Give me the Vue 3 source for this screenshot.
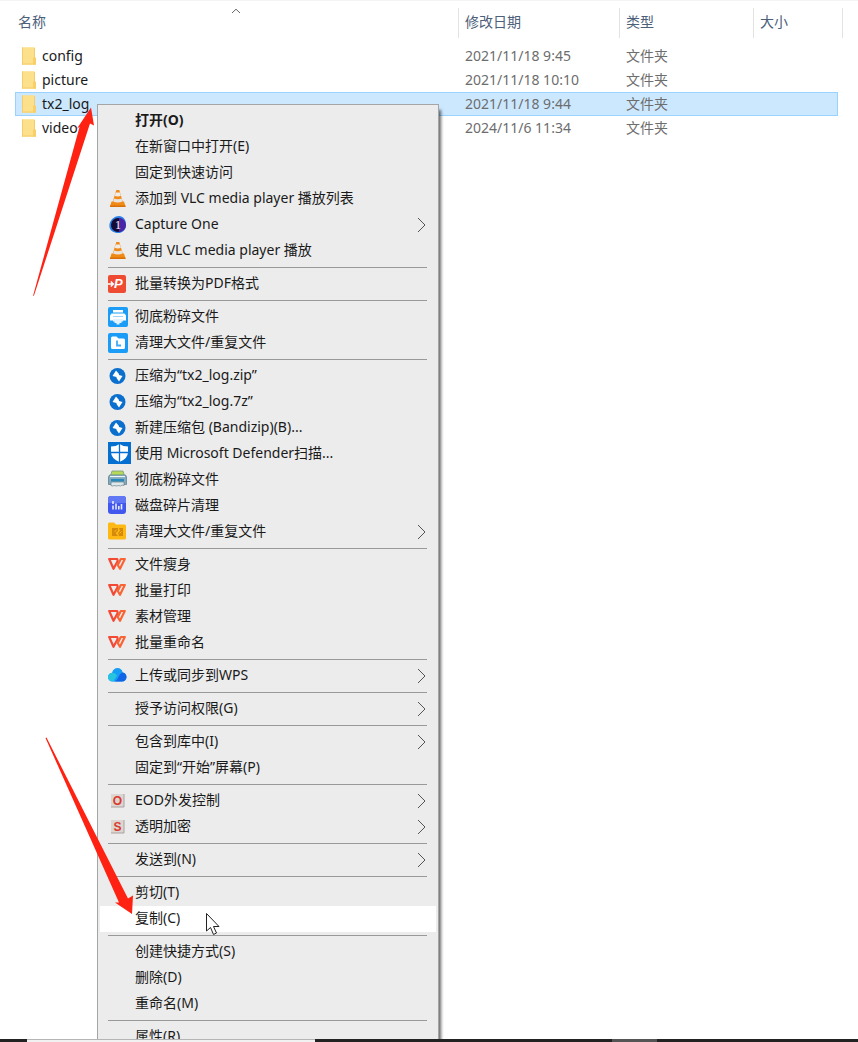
<script setup>
import { ref } from 'vue'

const files = [
  { name: 'config', date: '2021/11/18 9:45', type: '文件夹' },
  { name: 'picture', date: '2021/11/18 10:10', type: '文件夹' },
  { name: 'tx2_log', date: '2021/11/18 9:44', type: '文件夹' },
  { name: 'video', date: '2024/11/6 11:34', type: '文件夹' },
]
const selected = ref('tx2_log')
const active = ref('复制(C)')

const groups = [
  [
    { label: '打开(O)', bold: true },
    { label: '在新窗口中打开(E)' },
    { label: '固定到快速访问' },
    { label: '添加到 VLC media player 播放列表', icon: 'vlc' },
    { label: 'Capture One', icon: 'capture', sub: true },
    { label: '使用 VLC media player 播放', icon: 'vlc' },
  ],
  [{ label: '批量转换为PDF格式', icon: 'pdf' }],
  [
    { label: '彻底粉碎文件', icon: 'shred' },
    { label: '清理大文件/重复文件', icon: 'clean' },
  ],
  [
    { label: '压缩为“tx2_log.zip”', icon: 'bandizip' },
    { label: '压缩为“tx2_log.7z”', icon: 'bandizip' },
    { label: '新建压缩包 (Bandizip)(B)...', icon: 'bandizip' },
    { label: '使用 Microsoft Defender扫描...', icon: 'defender' },
    { label: '彻底粉碎文件', icon: 'printer' },
    { label: '磁盘碎片清理', icon: 'disk' },
    { label: '清理大文件/重复文件', icon: 'folder', sub: true },
  ],
  [
    { label: '文件瘦身', icon: 'wps' },
    { label: '批量打印', icon: 'wps' },
    { label: '素材管理', icon: 'wps' },
    { label: '批量重命名', icon: 'wps' },
  ],
  [{ label: '上传或同步到WPS', icon: 'cloud', sub: true }],
  [{ label: '授予访问权限(G)', sub: true }],
  [{ label: '包含到库中(I)', sub: true }, { label: '固定到“开始”屏幕(P)' }],
  [
    { label: 'EOD外发控制', icon: 'eod', sub: true },
    { label: '透明加密', icon: 'secure', sub: true },
  ],
  [{ label: '发送到(N)', sub: true }],
  [{ label: '剪切(T)' }, { label: '复制(C)' }],
  [{ label: '创建快捷方式(S)' }, { label: '删除(D)' }, { label: '重命名(M)' }],
  [{ label: '属性(R)' }],
]
</script>

<template>
  <div class="screen">
    <main class="explorer">
      <svg class="sort" viewBox="0 0 10 6" aria-hidden="true"><path d="M1 5 5 1.2 9 5" /></svg>
      <table class="files">
        <colgroup>
          <col />
          <col class="c-date" />
          <col class="c-type" />
          <col class="c-size" />
        </colgroup>
        <thead>
          <tr>
            <th scope="col">名称</th>
            <th scope="col">修改日期</th>
            <th scope="col">类型</th>
            <th scope="col">大小</th>
          </tr>
        </thead>
        <tbody>
          <tr
            v-for="f in files"
            :key="f.name"
            :class="{ selected: f.name === selected }"
            @click="selected = f.name"
          >
            <td>
              <span class="name">
                <svg width="16" height="20" viewBox="0 0 16 20" aria-hidden="true">
                  <path d="M1 1.5h12.5V13H15v5.5H1z" fill="#fbdc82" />
                  <path d="M1 1.500h12.500V18.500H1z" fill="#fde08c" />
                  <path d="M1.500 1.500v17M13.500 2v11M1 18h14" stroke="#f3cd68" fill="none" />
                  <path d="M12 18.500v-6.500l1.500-1.500 1.500 1.500v6.500z" fill="#f8d067" />
                </svg>
                {{ f.name }}
              </span>
            </td>
            <td>{{ f.date }}</td>
            <td>{{ f.type }}</td>
            <td></td>
          </tr>
        </tbody>
      </table>

      <div class="menu" role="menu">
        <div v-for="(g, gi) in groups" :key="gi" class="group" role="group">
          <button
            v-for="item in g"
            :key="item.label"
            type="button"
            role="menuitem"
            class="item"
            :class="{ bold: item.bold, active: item.label === active }"
            @mouseenter="active = item.label"
          >
            <svg class="icon" viewBox="0 0 24 24" aria-hidden="true">
              <g v-if="item.icon === 'vlc'">
                <path d="M5.500 14.500h12.500l1.500 5H4z" fill="#f08a12" />
                <path d="M4 18.500h15.500V20H4z" fill="#d96f08" />
                <path d="M10.300 3h3l3.700 12.500q-5.250 2.500-10.500 0z" fill="#f08a1c" />
                <path d="M9.700 5.500h4.200l1 3.300q-3.100 1.200-6.200 0z" fill="#f1ece4" />
                <path d="M8 11.500q3.800 1.500 7.700 0l.9 3q-4.800 1.900-9.500 0z" fill="#e9e4dc" />
              </g>
              <g v-else-if="item.icon === 'capture'">
                <path d="M10 3.500c6-2 10 2 10 8 0 7-6 10-11 8-6-1-7-8-4-12 1-2 3-3 5-4z" fill="#2b82e8" />
                <circle cx="12" cy="12" r="7" fill="#160b32" />
                <path d="M13 5a7 7 0 0 1 0 14z" fill="#4a25a8" />
                <text x="12" y="16" text-anchor="middle" class="one">1</text>
              </g>
              <g v-else-if="item.icon === 'pdf'">
                <rect x="2" y="3" width="18" height="18" rx="2" fill="#ee4b32" />
                <path d="M2 12h4.500M4.800 9.500 7.300 12l-2.500 2.500" stroke="#fff" stroke-width="1.500" fill="none" />
                <text x="8" y="16" class="pdf">P</text>
              </g>
              <g v-else-if="item.icon === 'shred'">
                <rect x="2" y="2" width="20" height="20" rx="2" fill="#1b9df7" />
                <path d="M7 5h10v2.500H7zM5.500 8.500h13l1.500 2v5H4v-5z" fill="#fff" />
                <path d="M7 11.500h10" stroke="#9ed5fb" />
                <path d="M7 14h10v2.500h-1.500V18h-2v1.500h-3V18h-2v-1.500H7z" fill="#e2f3ff" />
              </g>
              <g v-else-if="item.icon === 'clean'">
                <rect x="2" y="2" width="20" height="20" rx="2" fill="#1b9df7" />
                <path d="M5 7q0-1.500 1.500-1.500h4l2 2h5q1.500 0 1.500 1.500v7.500q0 1.500-1.500 1.500h-11Q5 18 5 16.500z" fill="#fff" />
                <path d="M11 9.500v5h4" stroke="#3faaf5" stroke-width="1.800" fill="none" />
              </g>
              <g v-else-if="item.icon === 'bandizip'">
                <circle cx="11.500" cy="12" r="8" fill="#0b6fce" />
                <path d="M10 6.500 13 10v1l3.500 1-3.500 5.500-2.500-3.500v-1L6.500 12z" fill="#fff" />
              </g>
              <g v-else-if="item.icon === 'defender'">
                <rect x="2" y="0" width="23" height="22" fill="#0670d0" />
                <path d="M13.500 2q3.500 2.500 8.500 2.500v5.500q0 6.500-8.500 10Q5 16.500 5 10V4.500Q10 4.500 13.500 2z" fill="#fff" />
                <path d="M13.500 2v18M5 10.500h17" stroke="#0670d0" stroke-width="1.300" />
              </g>
              <g v-else-if="item.icon === 'printer'">
                <path d="M6 3h11l1.500 5h-14z" fill="#b6d957" stroke="#789a7c" stroke-width=".8" />
                <path d="M3.500 7h16l1 2v7.500h-18V9z" fill="#86a9bd" stroke="#5c8296" stroke-width=".8" />
                <path d="M4 8.500h15" stroke="#edf7fa" stroke-width="1.200" />
                <path d="M5 11h13v2.500H5z" fill="#2788ba" />
                <path d="M5 14h13v3.500l-2-.5-1.500 1-2-.5-2 .5-2-.5-2 .5-1.500-.5z" fill="#dfe9ec" stroke="#667e88" stroke-width=".7" />
              </g>
              <g v-else-if="item.icon === 'disk'">
                <rect x="2" y="2" width="18" height="18" rx="3" fill="#4257ee" />
                <path d="M2 5q0-3 3-3h12q3 0 3 3v4H2z" fill="#6277f4" />
                <path d="M7 7v3M7 11.500v4M10 9.500v6M12.800 12v3.500M15.500 10v5.500" stroke="#e5e9ff" stroke-width="1.600" />
              </g>
              <g v-else-if="item.icon === 'folder'">
                <path d="M2 4q0-1.500 1.500-1.500H8l2 2h8.500Q20 4.500 20 6v12q0 1.500-1.500 1.500h-15Q2 19.500 2 18z" fill="#fdb813" />
                <path d="M6 8h6v3l-2.500 2 2.500 3H6zM13 8h4v8h-4l-1-3 2-2z" fill="#d48a0a" />
                <path d="m8.500 11.500 2-1.500M13.500 13.500l2-2" stroke="#fdb813" />
              </g>
              <g v-else-if="item.icon === 'wps'" fill="none" stroke-width="2.200" stroke-linejoin="round">
                <path d="M3.200 6h8l.5 2L7.500 15.800z" stroke="#f24a35" />
                <path d="M10.800 10.500 14 15.800 18.800 6h-4L11.500 12.500" stroke="#fa6435" />
              </g>
              <g v-else-if="item.icon === 'cloud'">
                <path d="M7 17.500c-3.300 0-5-2-5-4.500 0-2.300 1.500-4 4-4.300C7 5.500 9 4 11.500 4c2.700 0 4.600 1.500 5.200 4.500 2.300.5 3.800 2.200 3.800 4.500 0 2.700-2 4.500-4.500 4.500z" fill="#159cf4" />
                <path d="M2 13c0-2.300 1.500-4 4-4.300 2-.2 4 .8 5 3L7 17.500c-3.300 0-5-2-5-4.500z" fill="#27c3df" />
                <path d="M7 17.500c3 0 4.500-2 5.500-4.500s2.500-4 4.200-4.500c2.300.5 3.800 2.200 3.800 4.500 0 2.700-2 4.500-4.500 4.500z" fill="#1264e6" />
              </g>
              <g v-else-if="item.icon === 'eod' || item.icon === 'secure'">
                <rect x="5" y="5" width="13" height="13" fill="#ddd5d2" />
                <path d="M18 5v13H5" stroke="#aaa2a0" fill="none" />
                <text x="11.500" y="16" text-anchor="middle" class="letter">{{ item.icon === 'eod' ? 'O' : 'S' }}</text>
              </g>
            </svg>
            <span class="label">{{ item.label }}</span>
            <svg v-if="item.sub" class="chevron" viewBox="0 0 10 16" aria-hidden="true">
              <path d="m1 1 7 7-7 7" />
            </svg>
          </button>
        </div>
      </div>

      <svg class="marks" width="240" height="960" viewBox="0 0 240 960" aria-hidden="true">
        <path d="M33 296 79.500 127 77 128.500 91 107.500 94 125.500 90 123.500 34 295.500z" fill="#ff2212" />
        <path d="M45.500 738 119 902.500 115 902.500 132 914 133 895.500 128 898.500 46.500 737.500z" fill="#ff2212" />
        <path d="M206.500 913.500v17.500l4-3.500 3 7 3-1.500-3-6.500h5.500z" fill="#fff" stroke="#222" />
      </svg>
    </main>
    <footer class="taskbar"><span class="window"></span><span class="task"></span></footer>
  </div>
</template>

<style>
body {
  margin: 0;
  background: #fff;
}
</style>

<style scoped>
.screen {
  display: flex;
  flex-direction: column;
  height: 100vh;
  font-family: "Noto Sans", "Noto Sans CJK SC", sans-serif;
  font-size: 14px;
  color: #1a1a1a;
}
.explorer {
  position: relative;
  flex: 1;
  min-height: 0;
  overflow: hidden;
  box-sizing: border-box;
  border-top: 1px solid #f4f4f4;
  padding: 7px 20px 0 15px;
}
.sort {
  position: absolute;
  left: 231px;
  top: 7px;
  width: 10px;
  height: 6px;
  fill: none;
  stroke: #666;
}
.files {
  width: 100%;
  table-layout: fixed;
  border-collapse: separate;
  border-spacing: 0;
}
.c-date { width: 161px; }
.c-type { width: 134px; }
.c-size { width: 85px; }
th {
  position: relative;
  box-sizing: border-box;
  height: 30px;
  padding: 0 0 2px 6px;
  border-left: 1px solid #e2e2e2;
  text-align: left;
  line-height: 20px;
  font-weight: 400;
  color: #4c607a;
}
th:first-child {
  padding-left: 3px;
  border-left: 0;
}
th:last-child::after {
  content: "";
  position: absolute;
  top: 0;
  bottom: 0;
  right: -5px;
  border-right: 1px solid #e2e2e2;
}
thead::after {
  content: "";
  display: block;
  height: 6px;
}
td {
  box-sizing: border-box;
  height: 24px;
  padding: 0 0 0 7px;
  border: 1px solid transparent;
  border-width: 1px 0;
  line-height: 20px;
  color: #6d6d6d;
}
td:first-child {
  padding-left: 6px;
  color: #1a1a1a;
}
.name {
  display: flex;
  align-items: center;
  gap: 5px;
  height: 22px;
}
.selected td {
  background: #cce8ff;
  border-color: #99d1ff;
}
.selected td:first-child {
  border-left: 1px solid #99d1ff;
  padding-left: 5px;
}
.selected td:last-child { border-right: 1px solid #99d1ff; }
.menu {
  position: absolute;
  left: 97px;
  top: 103px;
  box-sizing: border-box;
  width: 342px;
  padding: 3px 2px;
  background: #ececec;
  border: 1px solid #a3a5a7;
  box-shadow: 3px 5px 3px -1px rgba(0, 0, 0, 0.6);
}
.group + .group::before {
  content: "";
  display: block;
  height: 1px;
  margin: 3px 9px 3px 8px;
  background: #999;
}
.item {
  display: flex;
  align-items: center;
  gap: 5px;
  width: 100%;
  height: 26px;
  padding: 0 9px 0 6px;
  border: 0;
  background: none;
  font: inherit;
  line-height: 20px;
  color: inherit;
  text-align: left;
}
.item.bold { font-weight: 700; }
.item.active { background: #fff; }
.label {
  flex: 1;
  padding-bottom: 2px;
  white-space: nowrap;
}
.icon {
  flex: none;
  width: 24px;
  height: 24px;
  overflow: visible;
}
.one {
  font: 400 12px "Liberation Serif", serif;
  fill: #fff;
}
.pdf {
  font: italic 700 13px "Liberation Sans", sans-serif;
  fill: #fff;
}
.letter {
  font: 700 12px "Liberation Sans", sans-serif;
  fill: #d93a2c;
}
.chevron {
  flex: none;
  width: 10px;
  height: 16px;
  fill: none;
  stroke: #555;
}
.marks {
  position: absolute;
  left: 0;
  top: -1px;
  pointer-events: none;
}
.taskbar {
  position: relative;
  flex: none;
  display: flex;
  height: 3px;
  background: #222;
}
.window {
  box-sizing: border-box;
  width: 288px;
  margin-left: 27px;
  background: #f1f1f1;
  border-top: 1px solid #b5b5b5;
}
.task {
  width: 45px;
  margin-left: 297px;
  background: #555;
}
</style>
